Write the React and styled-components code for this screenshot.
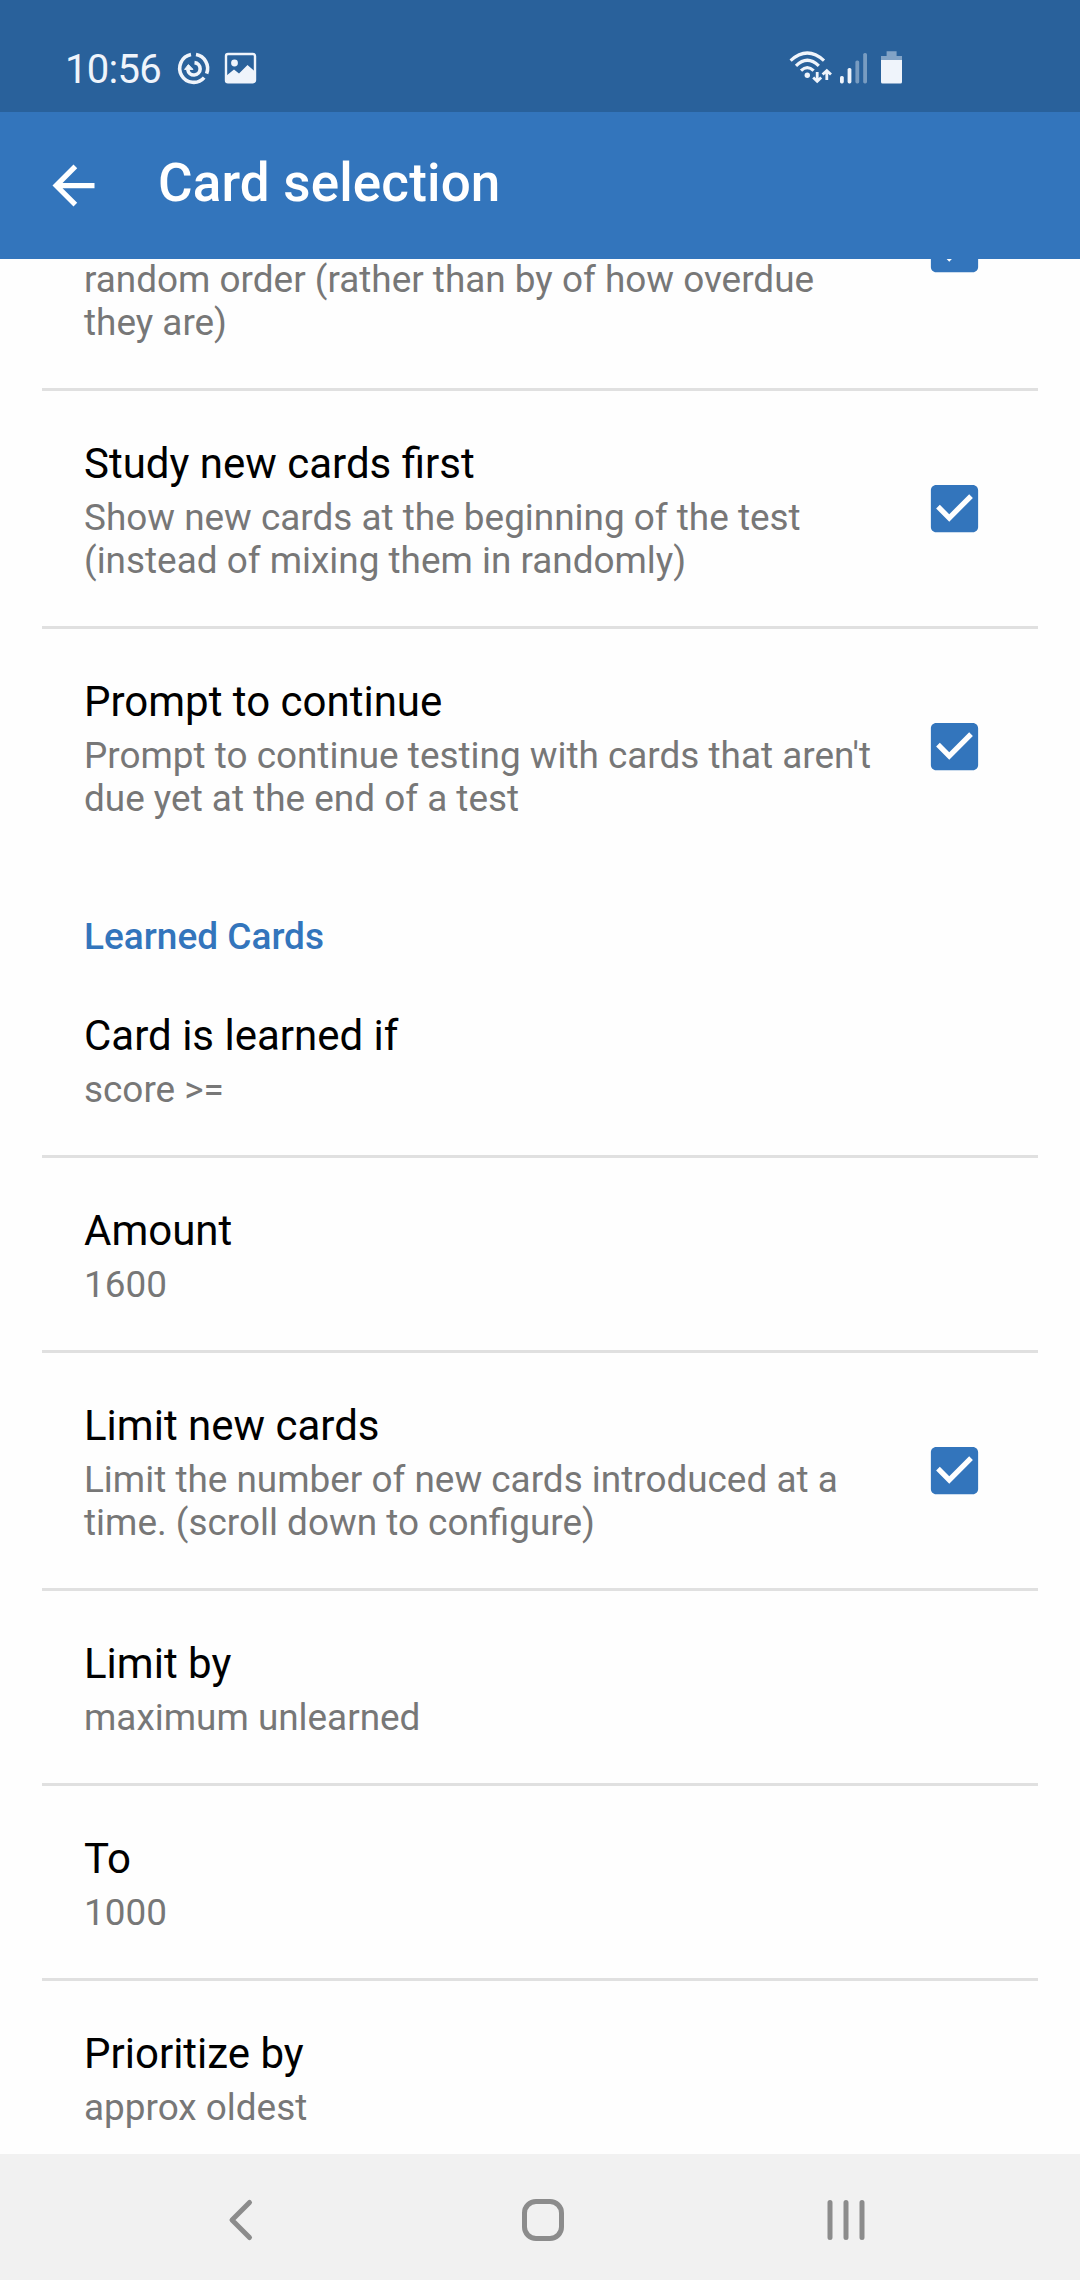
import React, { useState } from "react";
import styled, { createGlobalStyle } from "styled-components";

const GlobalStyle = createGlobalStyle`
  body {
    margin: 0;
    background: #fefefe;
  }

  * {
    box-sizing: border-box;
  }
`;

const Screen = styled.div`
  display: flex;
  flex-direction: column;
  width: 1080px;
  height: 2280px;
  overflow: hidden;
  background: #fefefe;
  font-family: Roboto, sans-serif;
`;

const StatusBar = styled.div`
  display: flex;
  justify-content: space-between;
  flex: none;
  height: 112px;
  padding: 45px 175px 0 65px;
  background: #29619b;
  color: #eff4fb;
`;

const StatusGroup = styled.div`
  display: flex;
  height: 46px;
`;

const Clock = styled.span`
  width: 109px;
  font-size: 40px;
  line-height: 49px;
  letter-spacing: -0.7px;
`;

const AppBar = styled.header`
  display: flex;
  align-items: center;
  flex: none;
  height: 147px;
  padding-left: 42px;
  background: #3375bc;
  color: white;
`;

const AppTitle = styled.h1`
  margin: 0 0 5px 53px;
  font-size: 53px;
  font-weight: 500;
  line-height: 62px;
  letter-spacing: 0.15px;
`;

const List = styled.main`
  flex: 1;
  min-height: 0;
  overflow: hidden;
`;

const Row = styled.div`
  display: flex;
  align-items: center;
  margin: 0 42px;
  border-bottom: ${({ $last }) => ($last ? "none" : "3px solid #e0e0e0")};
`;

/* the first row is scrolled halfway under the app bar */
const ScrolledRow = styled(Row)`
  height: 281px;
  margin-top: -149px;
  align-items: stretch;
`;

const RowText = styled.div`
  display: flex;
  flex-direction: column;
  justify-content: flex-end;
  flex: none;
  width: 880.5px;
  padding: 48px 0 44px 42px;
`;

const RowTitle = styled.div`
  margin-bottom: 8px;
  color: black;
  font-size: 42px;
  line-height: 49px;
`;

const RowSummary = styled.div`
  color: #777;
  font-size: 36.9px;
  line-height: 43px;
  white-space: pre-line;
`;

const SectionTitle = styled.h2`
  height: 99px;
  margin: 0;
  padding: 51px 84px 0;
  color: #3375bc;
  font-size: 37px;
  font-weight: 500;
  line-height: 43px;
`;

const CheckButton = styled.button`
  display: flex;
  align-items: center;
  padding: 0 0 1px;
  border: 0;
  background: none;
  color: #3375bc;
  cursor: pointer;
`;

const NavBar = styled.nav`
  display: flex;
  justify-content: space-between;
  align-items: center;
  flex: none;
  height: 126px;
  padding: 6px 204px 0 211px;
  background: #f1f1f1;
`;

const NavIcon = styled.svg`
  width: 60px;
  height: 60px;
  fill: none;
  stroke: #8c8c8c;
  stroke-width: 5;
  stroke-linecap: round;
  stroke-linejoin: round;
`;

const Check = ({ label }) => {
  const [checked, setChecked] = useState(true);

  return (
    <CheckButton
      role="checkbox"
      aria-checked={checked}
      aria-label={label}
      onClick={() => setChecked(!checked)}
    >
      <svg width="63" height="63" viewBox="0 0 24 24" fill="currentColor">
        {checked ? (
          <path d="M19 3H5c-1.11 0-2 .9-2 2v14c0 1.1.89 2 2 2h14c1.11 0 2-.9 2-2V5c0-1.1-.89-2-2-2zm-9 14l-5-5 1.41-1.41L10 14.17l7.59-7.59L19 8l-9 9z" />
        ) : (
          <path d="M19 5v14H5V5h14m0-2H5c-1.1 0-2 .9-2 2v14c0 1.1.9 2 2 2h14c1.1 0 2-.9 2-2V5c0-1.1-.9-2-2-2z" />
        )}
      </svg>
    </CheckButton>
  );
};

const Setting = ({ title, summary, check, last }) => (
  <Row $last={last}>
    <RowText>
      <RowTitle>{title}</RowTitle>
      <RowSummary>{summary}</RowSummary>
    </RowText>
    {check && <Check label={title} />}
  </Row>
);

const testSettings = [
  {
    title: "Study new cards first",
    summary: "Show new cards at the beginning of the test\n(instead of mixing them in randomly)",
    check: true
  },
  {
    title: "Prompt to continue",
    summary: "Prompt to continue testing with cards that aren't\ndue yet at the end of a test",
    check: true,
    last: true
  }
];

const learnedSettings = [
  { title: "Card is learned if", summary: "score >=" },
  { title: "Amount", summary: "1600" },
  {
    title: "Limit new cards",
    summary: "Limit the number of new cards introduced at a\ntime. (scroll down to configure)",
    check: true
  },
  { title: "Limit by", summary: "maximum unlearned" },
  { title: "To", summary: "1000" },
  { title: "Prioritize by", summary: "approx oldest", last: true }
];

const NotificationIcons = () => (
  <svg width="86" height="46" viewBox="174 45 86 46" fill="none" stroke="currentColor">
    <g strokeWidth="3.6">
      <path d="M191 54.6A14 14 0 1 0 204.2 77.6" />
      <path d="M196 54.6A14 14 0 0 1 206.6 73.6" />
      <path d="M194.5 62.6A6.2 6.2 0 1 1 187.8 69.5" />
    </g>
    <path d="M184.6 69.4L188.4 64.6L193 69.4Z" fill="currentColor" strokeWidth="1" />
    <rect x="226" y="54" width="29" height="28.2" rx="2" strokeWidth="2.4" />
    <circle cx="234.5" cy="63" r="3.4" fill="currentColor" stroke="none" />
    <path
      d="M226 76L234 69.5L239 73.5L247.5 65L255 71.5V82H226Z"
      fill="currentColor"
      stroke="none"
    />
  </svg>
);

const SystemIcons = () => (
  <svg width="119" height="46" viewBox="786 45 119 46" fill="none" stroke="currentColor">
    <g strokeWidth="3.2">
      <path d="M790.6 60.6Q807.3 45.4 824 60.6" />
      <path d="M796 65.8Q807.3 54.6 818.8 65.8" />
      <path d="M801 70.6Q807.3 64.6 813.6 70.6" />
      <path d="M817.2 72V81M813.2 77.6L817.2 81.4L821.2 77.6" strokeWidth="2.8" />
      <path d="M826.8 80V71M822.6 74.6L826.8 70.6L831 74.6" strokeWidth="2.8" />
    </g>
    <g fill="currentColor" stroke="none">
      <circle cx="807.3" cy="75.2" r="2.7" />
      <rect x="840" y="76" width="3.8" height="7.4" rx="1.6" />
      <rect x="847.6" y="68" width="3.8" height="15.4" rx="1.6" />
      <rect x="855.4" y="60.4" width="3.8" height="23" rx="1.6" opacity=".4" />
      <rect x="863.2" y="53" width="3.8" height="30.4" rx="1.6" opacity=".4" />
      <path d="M886.6 51.2H896.6V56H902V60H881V56H886.6Z" opacity=".45" />
      <path d="M881 60H902V82A1.6 1.6 0 0 1 900.4 83.6H882.6A1.6 1.6 0 0 1 881 82Z" />
    </g>
  </svg>
);

const App = () => (
  <Screen>
    <GlobalStyle />
    <StatusBar>
      <StatusGroup>
        <Clock>10:56</Clock>
        <NotificationIcons />
      </StatusGroup>
      <SystemIcons />
    </StatusBar>
    <AppBar>
      <svg width="63" height="63" viewBox="0 0 24 24" fill="currentColor">
        <path d="M20 11H7.83l5.59-5.59L12 4l-8 8 8 8 1.41-1.41L7.83 13H20v-2z" />
      </svg>
      <AppTitle>Card selection</AppTitle>
    </AppBar>
    <List>
      <ScrolledRow>
        <RowText>
          <RowSummary>{"random order (rather than by of how overdue\nthey are)"}</RowSummary>
        </RowText>
        <Check label="Random order" />
      </ScrolledRow>
      {testSettings.map(item => (
        <Setting key={item.title} {...item} />
      ))}
      <SectionTitle>Learned Cards</SectionTitle>
      {learnedSettings.map(item => (
        <Setting key={item.title} {...item} />
      ))}
    </List>
    <NavBar>
      <NavIcon viewBox="211 2190 60 60">
        <path d="M249.5 2202.5L232 2220L249.5 2237.5" />
      </NavIcon>
      <NavIcon viewBox="514 2190 60 60">
        <rect x="524.5" y="2201.5" width="37" height="37" rx="11.5" />
      </NavIcon>
      <NavIcon viewBox="816 2190 60 60">
        <path d="M830 2202.5V2237.5M846 2202.5V2237.5M862 2202.5V2237.5" />
      </NavIcon>
    </NavBar>
  </Screen>
);

export default App;
